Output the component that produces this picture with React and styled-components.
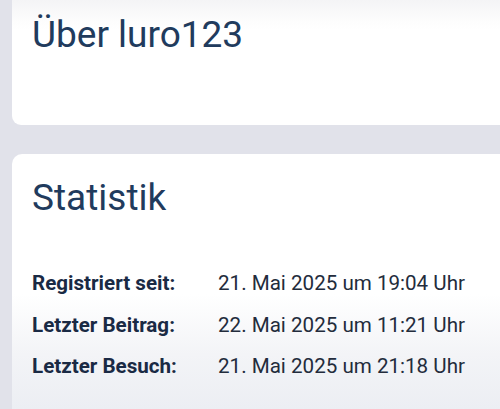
import * as React from "react";
import styled, { createGlobalStyle } from "styled-components";

const Global = createGlobalStyle`
  html, body {
    margin: 0;
    padding: 0;
    background: #e1e2ea;
    font-family: Roboto, "Liberation Sans", sans-serif;
  }
`;

const Page = styled.div`
  height: 409px;
  overflow: hidden;
  padding-left: 12px;
  display: flex;
  flex-direction: column;
  gap: 29px;
`;

const Card = styled.section`
  flex-shrink: 0;
  margin-right: -20px;
  background: ${(p) => p.$bg};
  border-radius: ${(p) => p.$radius};
  padding: ${(p) => p.$pad} 20px 0 20px;
  height: ${(p) => p.$height};
  box-sizing: border-box;
`;

const Title = styled.h2`
  margin: 0;
  font-size: 37px;
  font-weight: 400;
  line-height: 1.2;
  color: #213b5d;
`;

const Stats = styled.dl`
  margin: 43px 0 0;
  display: grid;
  grid-template-columns: 186px 1fr;
  line-height: 41.5px;
  font-size: 20.6px;
`;

const Label = styled.dt`
  margin: 0;
  font-weight: 700;
  color: #1a2a44;
`;

const Value = styled.dd`
  margin: 0;
  color: #232c3c;
`;

const stats = [
  ["Registriert seit:", "21. Mai 2025 um 19:04 Uhr"],
  ["Letzter Beitrag:", "22. Mai 2025 um 11:21 Uhr"],
  ["Letzter Besuch:", "21. Mai 2025 um 21:18 Uhr"],
];

export default function App() {
  return (
    <>
      <Global />
      <Page>
        <Card
          $height="125px"
          $pad="13px"
          $radius="0 0 9px 9px"
          $bg="linear-gradient(180deg, #f4f4f6 0px, #fdfdfd 22px, #ffffff 30px)"
        >
          <Title>Über luro123</Title>
        </Card>
        <Card
          $height="280px"
          $pad="22px"
          $radius="10px 10px 0 0"
          $bg="linear-gradient(180deg, #ffffff 0px, #ffffff 140px, #f3f4f7 200px, #eceef3 255px)"
        >
          <Title>Statistik</Title>
          <Stats>
            {stats.map(([k, v]) => (
              <React.Fragment key={k}>
                <Label>{k}</Label>
                <Value>{v}</Value>
              </React.Fragment>
            ))}
          </Stats>
        </Card>
      </Page>
    </>
  );
}
